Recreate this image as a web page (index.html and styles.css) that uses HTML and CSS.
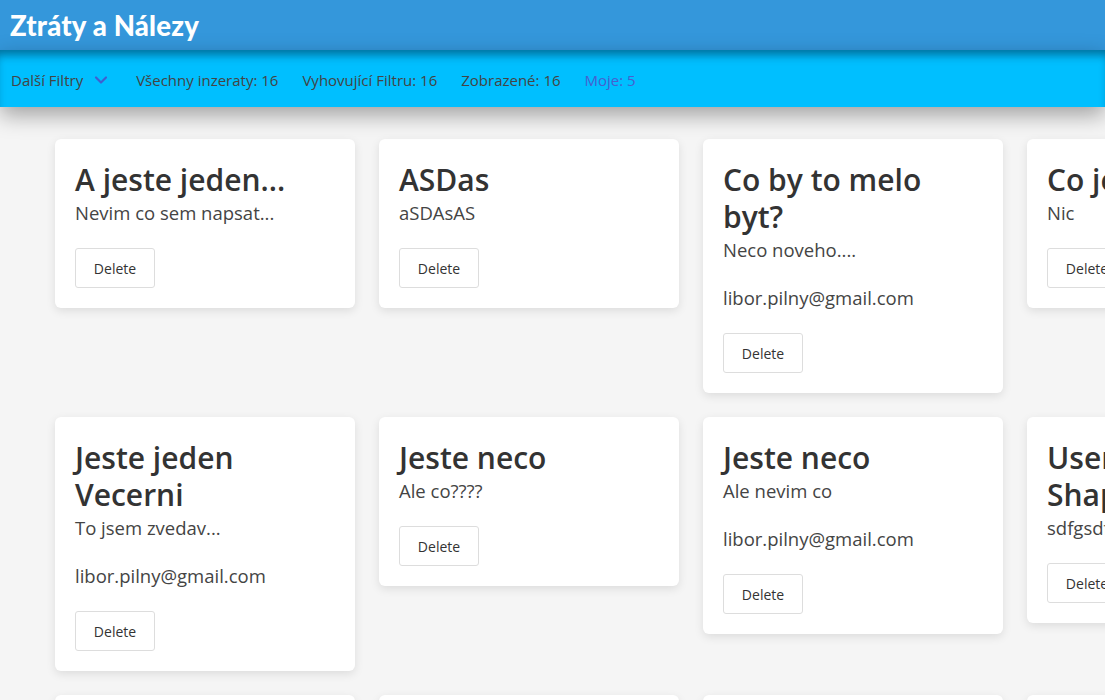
FILE: index.html
```html
<!DOCTYPE html>
<html lang="cs">
<head>
<meta charset="utf-8">
<title>Ztráty a Nálezy</title>
<link rel="stylesheet" href="styles.css">
</head>
<body>
<header class="topbar">
  <h1 class="brand">Ztráty a Nálezy</h1>
</header>
<nav class="filterbar">
  <span class="filter-toggle">Další Filtry
    <svg class="chev" viewBox="0 0 16 16" width="16" height="16"><path d="M3 5.5 L8 10.5 L13 5.5" fill="none" stroke="currentColor" stroke-width="2.2" stroke-linecap="round" stroke-linejoin="round"/></svg>
  </span>
  <span class="stat">Všechny inzeraty: 16</span>
  <span class="stat">Vyhovující Filtru: 16</span>
  <span class="stat">Zobrazené: 16</span>
  <span class="stat stat-mine">Moje: 5</span>
</nav>
<main class="grid">
  <article class="card">
    <h2>A jeste jeden...</h2>
    <p class="desc">Nevim co sem napsat...</p>
    <button class="btn">Delete</button>
  </article>
  <article class="card">
    <h2>ASDas</h2>
    <p class="desc">aSDAsAS</p>
    <button class="btn">Delete</button>
  </article>
  <article class="card">
    <h2>Co by to melo byt?</h2>
    <p class="desc">Neco noveho....</p>
    <p class="email">libor.pilny@gmail.com</p>
    <button class="btn">Delete</button>
  </article>
  <article class="card">
    <h2>Co je noveho</h2>
    <p class="desc">Nic</p>
    <button class="btn">Delete</button>
  </article>

  <article class="card">
    <h2>Jeste jeden Vecerni</h2>
    <p class="desc">To jsem zvedav...</p>
    <p class="email">libor.pilny@gmail.com</p>
    <button class="btn">Delete</button>
  </article>
  <article class="card">
    <h2>Jeste neco</h2>
    <p class="desc">Ale co????</p>
    <button class="btn">Delete</button>
  </article>
  <article class="card">
    <h2>Jeste neco</h2>
    <p class="desc">Ale nevim co</p>
    <p class="email">libor.pilny@gmail.com</p>
    <button class="btn">Delete</button>
  </article>
  <article class="card">
    <h2>User Shapeshifting</h2>
    <p class="desc">sdfgsdfg</p>
    <button class="btn">Delete</button>
  </article>

  <article class="card">
    <h2>Klice</h2>
    <p class="desc">Nalezeny klice</p>
    <button class="btn">Delete</button>
  </article>
  <article class="card">
    <h2>Penezenka</h2>
    <p class="desc">Cerna</p>
    <button class="btn">Delete</button>
  </article>
  <article class="card">
    <h2>Telefon</h2>
    <p class="desc">Ztraceny</p>
    <button class="btn">Delete</button>
  </article>
  <article class="card">
    <h2>Destnik</h2>
    <p class="desc">Modry</p>
    <button class="btn">Delete</button>
  </article>
</main>
</body>
</html>
```
FILE: styles.css
```css
* { box-sizing: border-box; }

html, body {
  margin: 0;
  padding: 0;
  background: #f5f5f5;
  overflow: hidden;
  font-family: "Open Sans", "Noto Sans", sans-serif;
  color: #333;
}

.topbar {
  height: 50px;
  background: #3497db;
  display: flex;
  align-items: center;
  padding: 0 10px;
}

.brand {
  margin: 0;
  font-family: "Lato", "Open Sans", sans-serif;
  font-weight: 900;
  font-size: 27.5px;
  color: #fff;
  letter-spacing: 0.2px;
}

.filterbar {
  position: relative;
  z-index: 2;
  height: 57px;
  background: #00bfff;
  box-shadow: inset 0 9px 10px -4px rgba(0, 60, 90, 0.6), 0 8px 22px rgba(0, 0, 0, 0.35);
  display: flex;
  align-items: center;
  gap: 24px;
  padding: 2px 11px 0;
  font-size: 15px;
  color: #444;
}

.filter-toggle {
  display: flex;
  align-items: center;
  gap: 10px;
  margin-right: 3px;
}

.chev { color: #3f5fd0; }

.stat-mine { color: #4760cf; }

.grid {
  display: grid;
  grid-template-columns: repeat(4, 300px);
  column-gap: 24px;
  row-gap: 24px;
  align-items: start;
  padding: 32px 0 0 55px;
  width: max-content;
}

.card {
  background: #fff;
  border-radius: 6px;
  box-shadow: 0 3px 10px rgba(0, 0, 0, 0.1);
  padding: 22px 20px 20px;
}

.card h2 {
  margin: 0;
  font-size: 30px;
  line-height: 37px;
  font-weight: 600;
  color: #333;
}

.desc {
  margin: 0;
  font-size: 18.5px;
  line-height: 30px;
  color: #444;
}

.email {
  margin: 18px 0 0;
  font-size: 18.5px;
  line-height: 30px;
  color: #444;
}

.btn {
  display: block;
  margin-top: 20px;
  width: 80px;
  height: 40px;
  background: #fff;
  border: 1px solid #ddd;
  border-radius: 3px;
  font-family: inherit;
  font-size: 14px;
  color: #333;
  padding: 0;
}
```
